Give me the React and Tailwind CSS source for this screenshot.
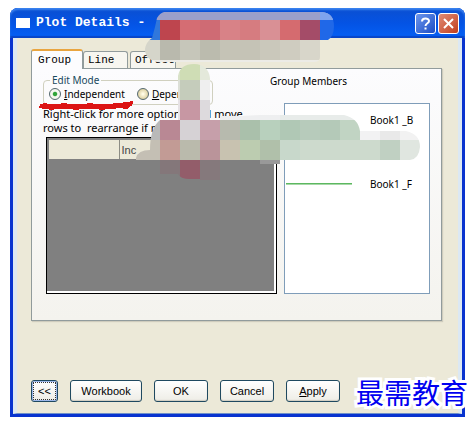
import React from 'react';
import { clsx } from 'clsx';

const TITLE_CELLS = [
    [140, 12, 200, 8, '#9b9fca'], [320, 12, 20, 8, '#7ea4ee'],
    [140, 20, 20, 20, '#3077dc'], [160, 20, 20, 20, '#be454e'], [180, 20, 20, 20, '#d56d73'],
    [200, 20, 20, 20, '#cf6b74'], [220, 20, 20, 20, '#d88287'], [240, 20, 20, 20, '#d67c80'],
    [260, 20, 20, 20, '#d99095'], [280, 20, 20, 20, '#d56b6f'], [300, 20, 20, 20, '#a44c68'],
    [320, 20, 20, 20, '#2068e8'],
    [140, 40, 20, 20, '#d5d5ca'], [160, 40, 20, 20, '#b9b9ad'], [180, 40, 20, 20, '#c6c6ba'],
    [200, 40, 20, 20, '#bbbbae'], [220, 40, 40, 20, '#c5c3b6'], [260, 40, 20, 20, '#cac8bb'],
    [280, 40, 20, 20, '#cfccc0'], [300, 40, 20, 20, '#d8d6ca'],
    [140, 60, 200, 2, '#ecebe6'],
];

const STEM_CELLS = [
    [180, 60, 20, 20, '#cfddb5'], [176, 60, 4, 20, '#d8e2c8'], [200, 60, 12, 20, '#e4e9db'],
    [176, 80, 4, 20, '#dcdfd7'], [180, 80, 20, 20, '#c5ccbb'], [200, 80, 12, 20, '#efefef'],
    [176, 100, 4, 20, '#e6e2e5'], [180, 100, 20, 20, '#c797a3'], [200, 100, 12, 20, '#dddadd'],
    [150, 120, 10, 20, '#b9b9b9'], [160, 120, 20, 20, '#b98894'], [180, 120, 20, 20, '#d6d2d5'],
    [200, 120, 20, 20, '#c69faa'], [136, 140, 24, 20, '#c4bfb4'], [160, 140, 20, 20, '#c29b95'],
    [180, 140, 20, 20, '#babaac'], [200, 140, 20, 20, '#ba949a'],
    [160, 160, 20, 20, '#84777a'], [180, 160, 20, 20, '#935d6a'], [200, 160, 20, 20, '#85797c'],
];

const ARM_CELLS = [
    [220, 114, 60, 6, '#eeeff0'], [280, 114, 80, 6, '#e8ecea'],
    [220, 120, 20, 20, '#b7baae'], [240, 120, 20, 20, '#aac0ab'], [260, 120, 20, 20, '#b8d0bd'],
    [280, 120, 20, 20, '#b0c8b5'], [300, 120, 20, 20, '#b7cbbb'], [320, 120, 20, 20, '#b4c9b8'],
    [340, 120, 20, 20, '#c1d4c3'], [360, 130, 20, 10, '#f2f2f3'], [380, 130, 20, 10, '#e9e9e9'],
    [400, 130, 20, 10, '#f2f2f2'],
    [220, 140, 20, 20, '#c8c2b0'], [240, 140, 20, 20, '#bcccb0'], [260, 140, 20, 20, '#b0c0aa'],
    [280, 140, 20, 20, '#c8d8cb'], [300, 140, 80, 20, '#cddacd'], [380, 140, 20, 20, '#c0d0c2'],
    [400, 140, 20, 20, '#e0e6e0'], [260, 160, 20, 4, '#999999'],
];

function Cells({ cells, clip }) {
    return (
        <g clipPath={`url(#${clip})`}>
            {cells.map(([x, y, w, h, fill]) => (
                <rect key={`${x}-${y}`} x={x} y={y} width={w} height={h} fill={fill} />
            ))}
        </g>
    );
}

function Marks() {
    return (
        <svg
            className="pointer-events-none absolute top-0 left-0"
            width="476"
            height="424"
            viewBox="0 0 476 424"
            shapeRendering="crispEdges"
            aria-hidden="true"
        >
            <defs>
                <clipPath id="title">
                    <path d="M164 12H322Q334 13 334 26Q334 36 328 40H320V57Q320 62 314 62H158Q145 60 145 49Q146 42 152 38Q155 28 157 18Q160 13 164 12Z" />
                </clipPath>
                <clipPath id="stem">
                    <path d="M178 76Q180 64 194 64Q208 64 210 78V120H220V180H200V179H190Q180 179 178 174H160V160H136V158Q138 150 150 150Q150 128 160 120H178Z" />
                </clipPath>
                <clipPath id="arm">
                    <path d="M220 120V116H240L260 115H344Q358 118 360 131H406Q420 134 420 147Q419 159 410 160H280V164H260V160H220Z" />
                </clipPath>
            </defs>
            <Cells cells={ARM_CELLS} clip="arm" />
            <Cells cells={STEM_CELLS} clip="stem" />
            <Cells cells={TITLE_CELLS} clip="title" />
            <g fill="none" stroke="#dc1414" strokeLinecap="round" strokeLinejoin="round">
                <path strokeWidth="5" d="M42 106L60 107L72 106L84 107L100 106L116 106L130 104" />
                <path strokeWidth="3" d="M40 107L45 104L51 109L64 104L76 109L90 104L102 109L116 104L126 108L132 102" />
            </g>
        </svg>
    );
}

function TitleButton({ label, className, children }) {
    return (
        <button
            aria-label={label}
            className={clsx('flex h-[21px] w-[21px] items-center justify-center rounded-[3px] border border-white', className)}
        >
            <svg width="17" height="17" viewBox="0 0 17 17" fill="none" stroke="#fff" strokeWidth="2">
                {children}
            </svg>
        </button>
    );
}

function Tab({ active, className, children }) {
    return (
        <button
            role="tab"
            aria-selected={!!active}
            className={clsx(
                'rounded-t-[3px] border border-b-0 border-[#919b9c] text-left font-["Liberation_Mono",monospace] text-[11px] leading-4 text-black',
                active ? '-mb-px h-5 border-t-2 border-t-[#e9a540] bg-[#fcfcfe] px-1.5' : 'h-[17px] bg-[#f7f6f0] px-1',
                className
            )}
        >
            {children}
        </button>
    );
}

function Radio({ name, defaultChecked, children }) {
    return (
        <label className="flex items-center gap-[3px]">
            <input
                type="radio"
                name={name}
                defaultChecked={defaultChecked}
                className="h-3 w-3 appearance-none rounded-full border border-[#54686f] bg-[radial-gradient(#fffbe4_10%,#cdbd84)] checked:bg-[radial-gradient(#2fa43a_25%,#f4f7f0_38%)]"
            />
            <span>{children}</span>
        </label>
    );
}

function DialogButton({ className, children }) {
    return (
        <button
            className={clsx(
                'h-[22px] rounded-[3px] border border-[#1f4960] bg-linear-to-b from-white to-[#eeede6] text-[11px] leading-4 text-black shadow-[inset_0_-1px_1px_#cfccc0]',
                className
            )}
        >
            {children}
        </button>
    );
}

export default function App() {
    return (
        <div className='relative overflow-hidden bg-white pt-2 pr-[11px] pb-[7px] pl-2.5 font-["Liberation_Sans",sans-serif]'>
            <main className="rounded-t-lg bg-[#0833cf] px-[3px] pb-[3px]">
                <header className="-mx-[3px] flex h-[30px] items-center rounded-t-lg bg-linear-to-b from-[#0b4fd0] via-[#0453e4] to-[#0560f5] pr-1.5 pl-1.5 shadow-[inset_0_2px_2px_#3c84f0,inset_0_-2px_1px_#0845c8]">
                    <span className="h-2.5 w-3.5 bg-white" />
                    <h1 className='ml-1.5 flex-1 font-["Liberation_Mono",monospace] text-[13px] leading-4 font-bold text-white'>
                        Plot Details -
                    </h1>
                    <div className="flex gap-0.5">
                        <TitleButton label="Help" className="bg-linear-to-br from-[#6d96ec] to-[#1c4bc4]">
                            <path d="M5 6.5C5 2.5 12 2.5 12 6C12 8.5 8.5 8 8.5 11M8.5 12.5V14.5" />
                        </TitleButton>
                        <TitleButton label="Close" className="bg-linear-to-br from-[#e08b75] to-[#c03c18]">
                            <path d="M4 4L13 13M13 4L4 13" />
                        </TitleButton>
                    </div>
                </header>

                <div className="border-x-4 border-b border-x-[#dce8f3] border-b-[#6d8fc9] bg-[#ece9d8] pt-[11px] pr-4 pb-[11px] pl-[14px]">
                    <div role="tablist" className="flex items-end">
                        <Tab active className="w-[52px]">Group</Tab>
                        <Tab className="w-[45px]">Line</Tab>
                        <Tab className="ml-0.5 w-[46px]">Offset</Tab>
                    </div>

                    <section className="flex justify-between gap-[7px] border border-[#919b9c] bg-linear-to-b from-[#fcfcfe] to-[#f4f3ee] pt-1 pr-[11px] pb-[26px] pl-[11px] shadow-[1px_1px_1px_#cfccbd]">
                        <div className='w-[234px] font-["Noto_Sans",sans-serif] text-[10px] leading-[14px] text-black'>
                            <fieldset className="h-8 w-[170px] rounded-[4px] border border-[#d0d0bf] pl-[5px]">
                                <legend className="ml-px px-0.5 text-[#17485c]">Edit Mode</legend>
                                <div className="flex gap-3">
                                    <Radio name="mode" defaultChecked><u>I</u>ndependent</Radio>
                                    <Radio name="mode"><u>D</u>ependent</Radio>
                                </div>
                            </fieldset>
                            <p className="mt-0.5 text-[11px] leading-[14px] whitespace-nowrap">
                                Right-click for more options, and move<br />
                                rows to &nbsp;rearrange if needed.
                            </p>
                            <div className="mt-0.5 ml-[3px] h-[157px] border border-black bg-white pr-0.5 pb-0.5">
                                <div className="h-full border-t-2 border-l-2 border-[#808080] bg-[#808080]">
                                    <table className="w-full border-collapse bg-[#ece9d8] text-left text-[11px]">
                                        <thead>
                                            <tr className="h-[19px]">
                                                <th className="w-[70px] border-r border-[#8c8c84]" />
                                                <th className='pl-0.5 font-["Liberation_Sans",sans-serif] font-normal text-[#444]'>Inc</th>
                                            </tr>
                                        </thead>
                                    </table>
                                </div>
                            </div>
                        </div>

                        <div className='flex-1 font-["Noto_Sans",sans-serif] text-[10px] leading-4 text-black'>
                            <h2 className="-ml-[14px]">Group Members</h2>
                            <ul className="mt-[14px] h-[191px] border border-[#7f9db9] bg-white pt-2">
                                <li className="flex h-16 pl-[85px]">Book1 _B</li>
                                <li className="flex h-4 items-center">
                                    <span className="mr-[18px] ml-px h-0.5 w-[66px] border-b border-[#a8d8a8] bg-[#5cb860]" />
                                    Book1 _F
                                </li>
                            </ul>
                        </div>
                    </section>

                    <footer className="mt-[59px] flex gap-3">
                        <DialogButton className="w-[27px] outline-1 -outline-offset-3 outline-dotted outline-[#333] ring-1 ring-[#9db8ea] ring-inset">&lt;&lt;</DialogButton>
                        <DialogButton className="w-[72px]">Workbook</DialogButton>
                        <DialogButton className="w-[54px]">OK</DialogButton>
                        <DialogButton className="w-[54px]">Cancel</DialogButton>
                        <DialogButton className="w-[54px]"><u>A</u>pply</DialogButton>
                    </footer>
                </div>
            </main>

            <Marks />
            <div className='absolute right-2 bottom-4 font-["Noto_Sans_CJK_SC",sans-serif] text-[28px] leading-8 text-[#0000f0] [paint-order:stroke_fill] [-webkit-text-stroke:6px_white]'>
                最需教育
            </div>
        </div>
    );
}
